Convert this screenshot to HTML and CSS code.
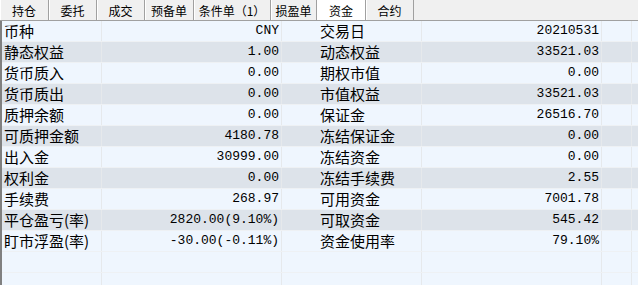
FILE: index.html
```html
<!DOCTYPE html>
<html lang="zh">
<head>
<meta charset="utf-8">
<link rel="stylesheet" href="styles.css">
</head>
<body>
<div class="tabs">
  <div class="tab w49">持仓</div>
  <div class="tab w48">委托</div>
  <div class="tab w48">成交</div>
  <div class="tab w49">预备单</div>
  <div class="tab w77">条件单（1）</div>
  <div class="tab w46">损盈单</div>
  <div class="tab w49 active">资金</div>
  <div class="tab w48">合约</div>
  <div class="tab-rest"></div>
</div>
<div class="grid">
  <div class="row odd"><div class="c1">币种</div><div class="c2">CNY</div><div class="c3">交易日</div><div class="c4">20210531</div><div class="c5"></div><div class="c6"></div></div>
  <div class="row even"><div class="c1">静态权益</div><div class="c2">1.00</div><div class="c3">动态权益</div><div class="c4">33521.03</div><div class="c5"></div><div class="c6"></div></div>
  <div class="row odd"><div class="c1">货币质入</div><div class="c2">0.00</div><div class="c3">期权市值</div><div class="c4">0.00</div><div class="c5"></div><div class="c6"></div></div>
  <div class="row even"><div class="c1">货币质出</div><div class="c2">0.00</div><div class="c3">市值权益</div><div class="c4">33521.03</div><div class="c5"></div><div class="c6"></div></div>
  <div class="row odd"><div class="c1">质押余额</div><div class="c2">0.00</div><div class="c3">保证金</div><div class="c4">26516.70</div><div class="c5"></div><div class="c6"></div></div>
  <div class="row even"><div class="c1">可质押金额</div><div class="c2">4180.78</div><div class="c3">冻结保证金</div><div class="c4">0.00</div><div class="c5"></div><div class="c6"></div></div>
  <div class="row odd"><div class="c1">出入金</div><div class="c2">30999.00</div><div class="c3">冻结资金</div><div class="c4">0.00</div><div class="c5"></div><div class="c6"></div></div>
  <div class="row even"><div class="c1">权利金</div><div class="c2">0.00</div><div class="c3">冻结手续费</div><div class="c4">2.55</div><div class="c5"></div><div class="c6"></div></div>
  <div class="row odd"><div class="c1">手续费</div><div class="c2">268.97</div><div class="c3">可用资金</div><div class="c4">7001.78</div><div class="c5"></div><div class="c6"></div></div>
  <div class="row even"><div class="c1">平仓盈亏(率)</div><div class="c2">2820.00(9.10%)</div><div class="c3">可取资金</div><div class="c4">545.42</div><div class="c5"></div><div class="c6"></div></div>
  <div class="row odd"><div class="c1">盯市浮盈(率)</div><div class="c2">-30.00(-0.11%)</div><div class="c3">资金使用率</div><div class="c4">79.10%</div><div class="c5"></div><div class="c6"></div></div>
  <div class="row odd"><div class="c1"></div><div class="c2"></div><div class="c3"></div><div class="c4"></div><div class="c5"></div><div class="c6"></div></div>
  <div class="row odd"><div class="c1"></div><div class="c2"></div><div class="c3"></div><div class="c4"></div><div class="c5"></div><div class="c6"></div></div>
</div>
</body>
</html>
```

FILE: styles.css
```css
html, body {
  margin: 0;
  padding: 0;
  background: #f0f0f0;
  overflow: hidden;
  width: 638px;
  height: 285px;
}
.tabs {
  display: flex;
  height: 20px;
  background: #f0f0f0;
  border-bottom: 1px solid #a0a0a0;
  box-sizing: content-box;
}
.tab {
  box-sizing: border-box;
  height: 20px;
  border-right: 1px solid #a0a0a0;
  box-shadow: inset 1px 0 0 #ffffff;
  font-family: "Noto Sans CJK SC", sans-serif;
  font-size: 12px;
  line-height: 20px;
  text-align: center;
  color: #000;
  padding-top: 1px;
}
.tab.active {
  background: #ffffff;
  box-shadow: none;
}
.tab-rest { flex: 1; }
.w46 { width: 46px; }
.w48 { width: 48px; }
.w49 { width: 49px; }
.w77 { width: 77px; }
.grid {
  border-left: 2px solid #808080;
  display: flex;
  flex-direction: column;
}
.row {
  display: grid;
  grid-template-columns: 100px 180px 140px 180px 30px 1fr;
  height: 21px;
  box-sizing: border-box;
  border-bottom: 1px solid #eef1f4;
  flex-shrink: 0;
}
.row.odd { background: #eff6fe; }
.row.even { background: #dde3ea; }
.row > div {
  border-right: 1px solid #e6e9ec;
  line-height: 20px;
  white-space: nowrap;
  overflow: hidden;
  color: #000;
}
.c1, .c3 {
  font-family: "Noto Sans CJK SC", sans-serif;
  font-size: 15px;
  padding-left: 2px;
}
.c3 { padding-left: 38px; }
.c2, .c4 {
  font-family: "Liberation Mono", "DejaVu Sans Mono", monospace;
  font-size: 13px;
  text-align: right;
  padding-right: 2px;
}
.c6 { border-right: none !important; }
```
